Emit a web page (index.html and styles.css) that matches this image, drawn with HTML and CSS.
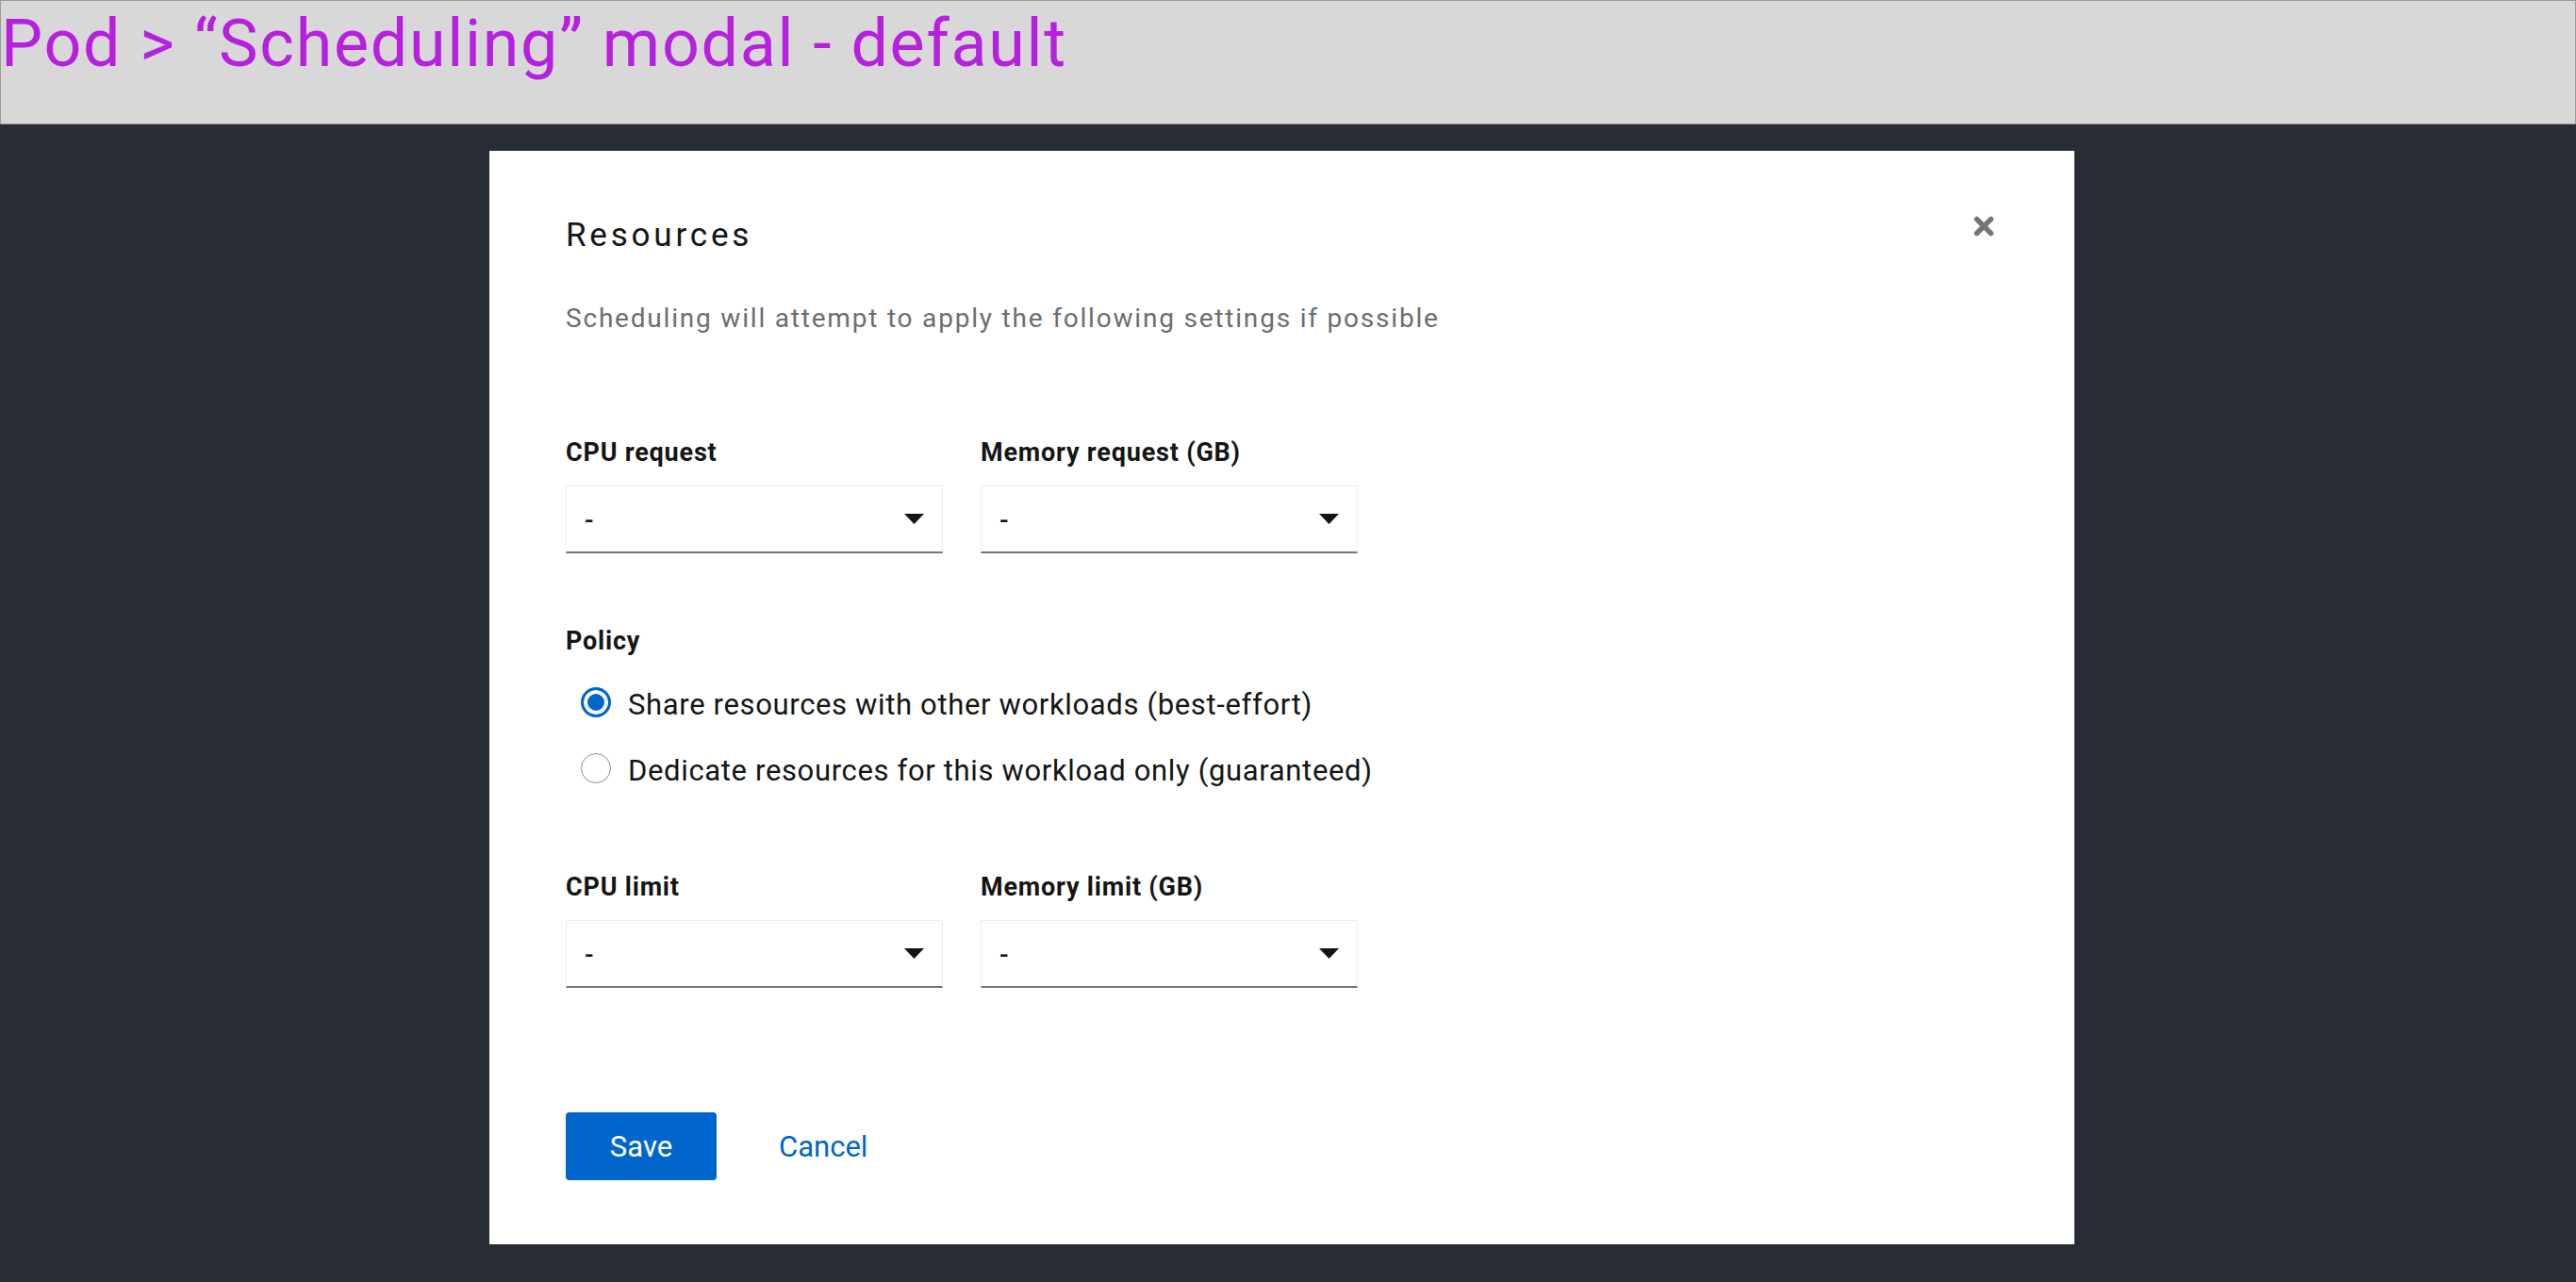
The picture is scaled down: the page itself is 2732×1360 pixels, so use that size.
FILE: index.html
```html
<!DOCTYPE html>
<html lang="en">
<head>
<meta charset="utf-8">
<title>Pod Scheduling modal</title>
<link rel="stylesheet" href="styles.css">
</head>
<body>
<header class="banner">
  <h1 class="banner-title">Pod &gt; “Scheduling” modal - default</h1>
</header>
<main class="stage">
  <section class="modal">
    <div class="modal-head">
      <h2 class="modal-title">Resources</h2>
      <button class="close" aria-label="Close">
        <svg viewBox="0 0 24 24" width="24" height="24"><path d="M4.5 4.5 L19.5 19.5 M19.5 4.5 L4.5 19.5" stroke="#72767b" stroke-width="5.5" stroke-linecap="round" fill="none"/></svg>
      </button>
    </div>
    <p class="desc">Scheduling will attempt to apply the following settings if possible</p>

    <div class="row row-first">
      <div class="field">
        <div class="label">CPU request</div>
        <div class="select"><span class="value">-</span><svg class="caret" viewBox="0 0 21 11" width="21" height="11"><path d="M0 0 H21 L10.5 11 Z" fill="#151515"/></svg></div>
      </div>
      <div class="field">
        <div class="label">Memory request (GB)</div>
        <div class="select"><span class="value">-</span><svg class="caret" viewBox="0 0 21 11" width="21" height="11"><path d="M0 0 H21 L10.5 11 Z" fill="#151515"/></svg></div>
      </div>
    </div>

    <div class="policy">
      <div class="label">Policy</div>
      <div class="radios">
        <div class="radio-row"><span class="radio checked"></span><span class="radio-text">Share resources with other workloads (best-effort)</span></div>
        <div class="radio-row"><span class="radio"></span><span class="radio-text">Dedicate resources for this workload only (guaranteed)</span></div>
      </div>
    </div>

    <div class="row row-second">
      <div class="field">
        <div class="label">CPU limit</div>
        <div class="select"><span class="value">-</span><svg class="caret" viewBox="0 0 21 11" width="21" height="11"><path d="M0 0 H21 L10.5 11 Z" fill="#151515"/></svg></div>
      </div>
      <div class="field">
        <div class="label">Memory limit (GB)</div>
        <div class="select"><span class="value">-</span><svg class="caret" viewBox="0 0 21 11" width="21" height="11"><path d="M0 0 H21 L10.5 11 Z" fill="#151515"/></svg></div>
      </div>
    </div>

    <div class="actions">
      <button class="btn btn-primary">Save</button>
      <button class="btn btn-link">Cancel</button>
    </div>
  </section>
</main>
</body>
</html>
```

FILE: styles.css
```css
* { box-sizing: border-box; }
html, body { margin: 0; padding: 0; }
body {
  width: 2732px;
  height: 1360px;
  background: #282c34;
  font-family: Roboto, "Noto Sans", sans-serif;
  overflow: hidden;
}
.banner {
  height: 132px;
  background: #d8d8d8;
  border: 1px solid #9b9b9b;
  padding: 10px 0 0 0;
}
.banner-title {
  margin: 0;
  font-weight: 400;
  font-size: 70px;
  line-height: 70px;
  color: #b620de;
  letter-spacing: 1.7px;
}
.stage {
  padding: 28px 0 0 519px;
}
.modal {
  width: 1681px;
  height: 1160px;
  background: #fff;
  padding: 70px 84px 68px 81px;
  display: flex;
  flex-direction: column;
  color: #151515;
}
.modal-head {
  display: flex;
  justify-content: space-between;
  align-items: flex-start;
}
.modal-title {
  margin: 0;
  font-size: 35px;
  line-height: 40px;
  font-weight: 400;
  letter-spacing: 3.8px;
  color: #151515;
}
.close {
  margin-top: -2px;
  padding: 0;
  border: 0;
  background: none;
  width: 24px;
  height: 24px;
  display: block;
}
.close svg { display: block; }
.desc {
  margin: 50px 0 0 0;
  font-size: 28px;
  line-height: 36px;
  letter-spacing: 1.8px;
  color: #6a6e73;
}
.row {
  display: flex;
  gap: 40px;
}
.row-first { margin-top: 106px; }
.row-second { margin-top: 88px; }
.field {
  width: 400px;
  display: flex;
  flex-direction: column;
  gap: 17px;
}
.label {
  font-size: 27px;
  line-height: 36px;
  font-weight: 700;
  letter-spacing: 0.8px;
  color: #151515;
}
.select {
  height: 72px;
  border: 1px solid #ededed;
  border-bottom: 2px solid #737679;
  display: flex;
  align-items: center;
  justify-content: space-between;
  padding: 2px 19px 0 19px;
}
.value {
  font-size: 28px;
  font-weight: 500;
  color: #151515;
}
.caret { display: block; margin-top: -3px; }
.policy {
  margin-top: 75px;
}
.radios {
  margin-top: 27px;
  display: flex;
  flex-direction: column;
  gap: 30px;
  padding-left: 16px;
}
.radio-row {
  display: flex;
  align-items: center;
  height: 40px;
  gap: 18px;
}
.radio {
  width: 32px;
  height: 32px;
  border-radius: 50%;
  border: 1.5px solid #8a8d90;
  background: #fff;
  flex: none;
}
.radio.checked {
  border: 3px solid #0066cc;
  box-shadow: inset 0 0 0 4px #fff;
  background: #0066cc;
}
.radio-text {
  font-size: 31px;
  line-height: 40px;
  letter-spacing: 0.65px;
  color: #151515;
  padding-top: 6px;
}
.actions {
  margin-top: auto;
  display: flex;
  gap: 34px;
}
.btn {
  height: 72px;
  border: 0;
  border-radius: 4px;
  font-family: inherit;
  font-size: 31px;
  padding: 0 32px;
  background: none;
}
.btn-primary {
  width: 160px;
  background: #0066cc;
  color: #fff;
}
.btn-link {
  color: #0066cc;
}
```
